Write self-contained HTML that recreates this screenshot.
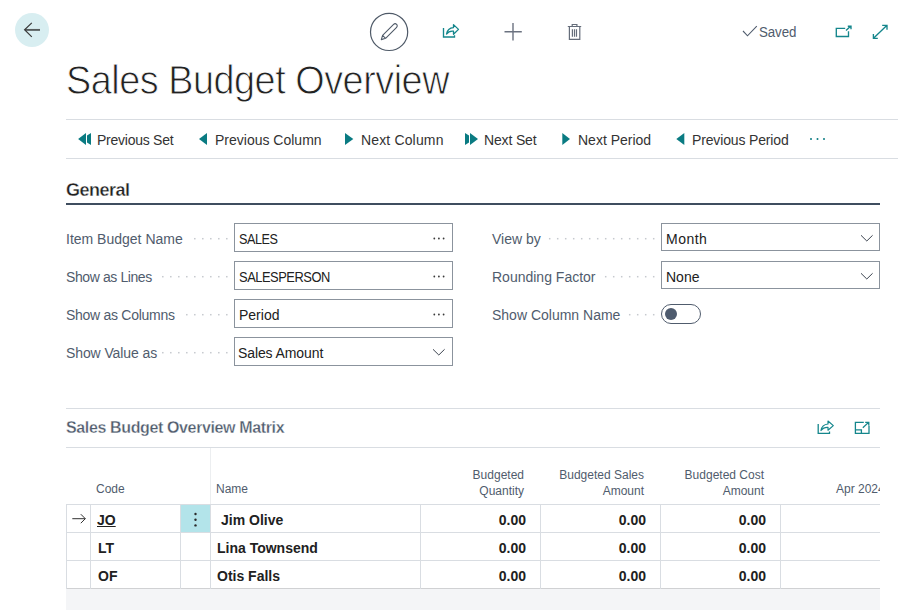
<!DOCTYPE html>
<html><head><meta charset="utf-8">
<style>
html,body{margin:0;padding:0;background:#fff;width:909px;height:610px;overflow:hidden;position:relative}
*{box-sizing:border-box}
body{font-family:"Liberation Sans",sans-serif;color:#212121}
.a{position:absolute}
.t{position:absolute;white-space:nowrap;line-height:1}
.hl{position:absolute;height:1px;background:#d9dde2}
.vl{position:absolute;width:1px;background:#d9dde2}
.lbl{position:absolute;white-space:nowrap;line-height:1;font-size:14px;color:#505c6d}
.dots{position:absolute;height:2px;background-image:radial-gradient(circle,#c4c8cd 0.8px,transparent 1px);background-size:8px 2px;background-repeat:repeat-x}
.box{position:absolute;border:1px solid #8b939d;background:#fff;width:219px;height:29px}
.val{position:absolute;white-space:nowrap;line-height:1;font-size:14px;color:#212121}
.act{position:absolute;white-space:nowrap;line-height:1;font-size:14px;color:#333}
.hdr{position:absolute;white-space:nowrap;line-height:1;font-size:12px;color:#505c6d;text-align:right}
.num{position:absolute;white-space:nowrap;line-height:1;font-size:14px;font-weight:bold;color:#212121;text-align:right}
.bold{position:absolute;white-space:nowrap;line-height:1;font-size:14px;font-weight:bold;color:#212121}
</style></head><body>

<!-- back button -->
<div class="a" style="left:15px;top:13px;width:34px;height:34px;border-radius:50%;background:#d8eef1"></div>
<svg class="a" style="left:0;top:0" width="909" height="60" viewBox="0 0 909 60">
  <path d="M25 29.9 H40" fill="none" stroke="#565c5d" stroke-width="1.9"/><path d="M31.8 22.9 L24.6 29.8 L31.8 36.9" fill="none" stroke="#3a3a3a" stroke-width="1.2"/>
  <circle cx="389.1" cy="31.9" r="18.6" fill="none" stroke="#4f5a68" stroke-width="1.2"/>
  <path d="M381.3 39.6 L382.6 35.3 L393.6 24.3 A2.12 2.12 0 0 1 396.6 27.3 L385.6 38.3 Z M382.6 35.3 L385.6 38.3" fill="none" stroke="#4f5a68" stroke-width="1.1" stroke-linejoin="round"/>
  <path d="M443.5 28 V37 H454.5 V35.3" fill="none" stroke="#14868c" stroke-width="1.35"/>
  <path d="M446.5 34 Q447.5 28 453.5 27.6 V24.6 L458.5 29.4 L453.5 34.2 V31.2 Q449 30.6 446.5 34 Z" fill="none" stroke="#14868c" stroke-width="1.3" stroke-linejoin="round"/>
  <path d="M513 23 V40.5 M504.5 31.8 H521.8" fill="none" stroke="#6b7280" stroke-width="1.4"/>
  <path d="M567.8 26.5 H581.2 M572.2 26.5 V24.5 H576.9 V26.5 M569.4 26.5 V39.4 H579.8 V26.5 M572.4 29.3 V36.8 M574.5 29.3 V36.8 M576.5 29.3 V36.8" fill="none" stroke="#656d7a" stroke-width="1.2"/>
  <path d="M743 31 L747.5 35.8 L756.8 26.2" fill="none" stroke="#505c6d" stroke-width="1.1"/>
  <path d="M845.2 28.4 H836.3 V36.5 H848.5 V31.3 M846 30.6 L850.5 26.3 M847.8 26.2 H851 V29.2" fill="none" stroke="#14868c" stroke-width="1.35"/>
  <path d="M873.5 38.3 L887 25.3 M882.2 25.3 H887 V29.8 M873.4 34 V38.3 H877.8" fill="none" stroke="#14868c" stroke-width="1.35"/>
</svg>
<div class="t" style="left:759px;top:25px;font-size:14px;color:#505c6d;letter-spacing:-0.1px;transform:scaleX(0.95);transform-origin:0 0">Saved</div>

<!-- title -->
<div class="t" style="left:65.5px;top:58.5px;font-size:41.5px;color:#222;letter-spacing:-0.5px;-webkit-text-stroke:0.9px #fff;transform:scaleX(0.91);transform-origin:0 0">Sales Budget Overview</div>

<!-- action bar -->
<div class="hl" style="left:66px;top:119px;width:832px"></div>
<div class="hl" style="left:66px;top:158px;width:832px"></div>
<svg class="a" style="left:0;top:120px" width="909" height="38" viewBox="0 120 909 38">
  <g fill="#0a7b82">
    <path d="M78.1 139 L86 133 V145 Z M91 133 L87 135.6 V142.4 L91 145 Z"/>
    <path d="M199 139 L207 133 V145 Z"/>
    <path d="M345 133 L353.3 139 L345 145 Z"/>
    <path d="M465 133 L469 135.6 V142.4 L465 145 Z M470 133 L478 139 L470 145 Z"/>
    <path d="M562.3 133 L570 139 L562.3 145 Z"/>
    <path d="M684.3 133 L676.3 139 L684.3 145 Z"/>
    <circle cx="811" cy="139" r="1"/><circle cx="817.5" cy="139" r="1"/><circle cx="824" cy="139" r="1"/>
  </g>
</svg>
<div class="act" style="left:97px;top:133px;letter-spacing:-0.25px">Previous Set</div>
<div class="act" style="left:215px;top:133px">Previous Column</div>
<div class="act" style="left:361px;top:133px;letter-spacing:0.15px">Next Column</div>
<div class="act" style="left:484px;top:133px;letter-spacing:-0.15px">Next Set</div>
<div class="act" style="left:578px;top:133px">Next Period</div>
<div class="act" style="left:692px;top:133px;letter-spacing:-0.15px">Previous Period</div>

<!-- General -->
<div class="t" style="left:66px;top:181px;font-size:18px;font-weight:bold;color:#212121;letter-spacing:-0.5px;-webkit-text-stroke:0.35px #fff">General</div>
<div class="a" style="left:66px;top:203px;width:814px;height:2px;background:#3f4d5f"></div>

<!-- fields left -->
<svg class="a" style="left:0;top:0" width="909" height="400" viewBox="0 0 909 400"><g fill="#c6c9ce"><rect x="226.05" y="237.95" width="1.5" height="1.5"/><rect x="218.05" y="237.95" width="1.5" height="1.5"/><rect x="210.05" y="237.95" width="1.5" height="1.5"/><rect x="202.05" y="237.95" width="1.5" height="1.5"/><rect x="194.05" y="237.95" width="1.5" height="1.5"/><rect x="226.05" y="275.95" width="1.5" height="1.5"/><rect x="218.05" y="275.95" width="1.5" height="1.5"/><rect x="210.05" y="275.95" width="1.5" height="1.5"/><rect x="202.05" y="275.95" width="1.5" height="1.5"/><rect x="194.05" y="275.95" width="1.5" height="1.5"/><rect x="186.05" y="275.95" width="1.5" height="1.5"/><rect x="178.05" y="275.95" width="1.5" height="1.5"/><rect x="170.05" y="275.95" width="1.5" height="1.5"/><rect x="162.05" y="275.95" width="1.5" height="1.5"/><rect x="226.05" y="313.95" width="1.5" height="1.5"/><rect x="218.05" y="313.95" width="1.5" height="1.5"/><rect x="210.05" y="313.95" width="1.5" height="1.5"/><rect x="202.05" y="313.95" width="1.5" height="1.5"/><rect x="194.05" y="313.95" width="1.5" height="1.5"/><rect x="186.05" y="313.95" width="1.5" height="1.5"/><rect x="226.05" y="351.95" width="1.5" height="1.5"/><rect x="218.05" y="351.95" width="1.5" height="1.5"/><rect x="210.05" y="351.95" width="1.5" height="1.5"/><rect x="202.05" y="351.95" width="1.5" height="1.5"/><rect x="194.05" y="351.95" width="1.5" height="1.5"/><rect x="186.05" y="351.95" width="1.5" height="1.5"/><rect x="178.05" y="351.95" width="1.5" height="1.5"/><rect x="170.05" y="351.95" width="1.5" height="1.5"/><rect x="162.05" y="351.95" width="1.5" height="1.5"/><rect x="652.95" y="237.95" width="1.5" height="1.5"/><rect x="644.95" y="237.95" width="1.5" height="1.5"/><rect x="636.95" y="237.95" width="1.5" height="1.5"/><rect x="628.95" y="237.95" width="1.5" height="1.5"/><rect x="620.95" y="237.95" width="1.5" height="1.5"/><rect x="612.95" y="237.95" width="1.5" height="1.5"/><rect x="604.95" y="237.95" width="1.5" height="1.5"/><rect x="596.95" y="237.95" width="1.5" height="1.5"/><rect x="588.95" y="237.95" width="1.5" height="1.5"/><rect x="580.95" y="237.95" width="1.5" height="1.5"/><rect x="572.95" y="237.95" width="1.5" height="1.5"/><rect x="564.95" y="237.95" width="1.5" height="1.5"/><rect x="556.95" y="237.95" width="1.5" height="1.5"/><rect x="548.95" y="237.95" width="1.5" height="1.5"/><rect x="652.95" y="275.95" width="1.5" height="1.5"/><rect x="644.95" y="275.95" width="1.5" height="1.5"/><rect x="636.95" y="275.95" width="1.5" height="1.5"/><rect x="628.95" y="275.95" width="1.5" height="1.5"/><rect x="620.95" y="275.95" width="1.5" height="1.5"/><rect x="612.95" y="275.95" width="1.5" height="1.5"/><rect x="604.95" y="275.95" width="1.5" height="1.5"/><rect x="652.95" y="313.95" width="1.5" height="1.5"/><rect x="644.95" y="313.95" width="1.5" height="1.5"/><rect x="636.95" y="313.95" width="1.5" height="1.5"/><rect x="628.95" y="313.95" width="1.5" height="1.5"/></g></svg>
<div class="lbl" style="left:66px;top:232px">Item Budget Name</div>
<div class="box" style="left:234px;top:223px"></div>
<div class="val" style="left:239px;top:232px;letter-spacing:-0.5px;transform:scaleX(0.9);transform-origin:0 0">SALES</div>
<svg class="a" style="left:430px;top:236px" width="20" height="6"><g fill="#3a3a3a"><circle cx="4.3" cy="2.5" r="0.9"/><circle cx="8.9" cy="2.5" r="0.9"/><circle cx="13.6" cy="2.5" r="0.9"/></g></svg>

<div class="lbl" style="left:66px;top:270px;letter-spacing:-0.4px">Show as Lines</div>
<div class="box" style="left:234px;top:261px"></div>
<div class="val" style="left:239px;top:270px;letter-spacing:-0.5px;transform:scaleX(0.92);transform-origin:0 0">SALESPERSON</div>
<svg class="a" style="left:430px;top:274px" width="20" height="6"><g fill="#3a3a3a"><circle cx="4.3" cy="2.5" r="0.9"/><circle cx="8.9" cy="2.5" r="0.9"/><circle cx="13.6" cy="2.5" r="0.9"/></g></svg>

<div class="lbl" style="left:66px;top:308px;letter-spacing:-0.28px">Show as Columns</div>
<div class="box" style="left:234px;top:299px"></div>
<div class="val" style="left:239px;top:308px">Period</div>
<svg class="a" style="left:430px;top:312px" width="20" height="6"><g fill="#3a3a3a"><circle cx="4.3" cy="2.5" r="0.9"/><circle cx="8.9" cy="2.5" r="0.9"/><circle cx="13.6" cy="2.5" r="0.9"/></g></svg>

<div class="lbl" style="left:66px;top:346px;letter-spacing:-0.1px">Show Value as</div>
<div class="box" style="left:234px;top:337px"></div>
<div class="val" style="left:238px;top:346px;letter-spacing:-0.1px">Sales Amount</div>
<svg class="a" style="left:431px;top:347px" width="16" height="10"><path d="M2 2.3 L7.8 8 L13.6 2.3" fill="none" stroke="#3c4450" stroke-width="1"/></svg>

<!-- fields right -->
<div class="lbl" style="left:492px;top:232px">View by</div>
<div class="box" style="left:661px;top:223px;height:28px"></div>
<div class="val" style="left:666px;top:232px;letter-spacing:0.5px">Month</div>
<svg class="a" style="left:858.5px;top:233.3px" width="16" height="10"><path d="M2 2.3 L7.8 8 L13.6 2.3" fill="none" stroke="#3c4450" stroke-width="1"/></svg>

<div class="lbl" style="left:492px;top:270px">Rounding Factor</div>
<div class="box" style="left:661px;top:261px;height:28px"></div>
<div class="val" style="left:666px;top:270px">None</div>
<svg class="a" style="left:858.5px;top:271.3px" width="16" height="10"><path d="M2 2.3 L7.8 8 L13.6 2.3" fill="none" stroke="#3c4450" stroke-width="1"/></svg>

<div class="lbl" style="left:492px;top:308px">Show Column Name</div>
<div class="a" style="left:661px;top:304px;width:40px;height:20px;border:1.3px solid #505c6d;border-radius:10px"></div>
<div class="a" style="left:665px;top:308px;width:12px;height:12px;border-radius:50%;background:#4e5b6e"></div>

<!-- matrix -->
<div class="hl" style="left:66px;top:408px;width:814px"></div>
<div class="t" style="left:66px;top:420px;font-size:16px;font-weight:bold;color:#505c6d;letter-spacing:-0.37px;-webkit-text-stroke:0.3px #fff">Sales Budget Overview Matrix</div>
<svg class="a" style="left:810px;top:412px" width="70" height="30" viewBox="810 412 70 30">
  <path d="M818.2 424 V433.4 H829.5 V431.5" fill="none" stroke="#14868c" stroke-width="1.3"/>
  <path d="M821 430.5 Q822 424.5 828 424 V421 L833.3 425.6 L828 430.2 V427.3 Q823.5 427 821 430.5 Z" fill="none" stroke="#14868c" stroke-width="1.2" stroke-linejoin="round"/>
  <path d="M863.8 422.3 H855.4 V433.4 H869 V425.8 M855.4 429.8 H861.4 V433.4 M862.8 427.8 L868.3 422.6 M865.2 422.3 H868.8 V425.5" fill="none" stroke="#14868c" stroke-width="1.3"/>
</svg>
<div class="hl" style="left:66px;top:447px;width:814px"></div>

<div class="vl" style="left:210px;top:448px;height:56px;background:#eceef0"></div>
<div class="t" style="left:96px;top:483px;font-size:12px;color:#505c6d">Code</div>
<div class="t" style="left:216px;top:483px;font-size:12px;color:#505c6d">Name</div>
<div class="hdr" style="left:404px;top:469px;width:120px">Budgeted</div>
<div class="hdr" style="left:404px;top:485px;width:120px">Quantity</div>
<div class="hdr" style="left:524px;top:469px;width:120px">Budgeted Sales</div>
<div class="hdr" style="left:524px;top:485px;width:120px">Amount</div>
<div class="hdr" style="left:644px;top:469px;width:120px">Budgeted Cost</div>
<div class="hdr" style="left:644px;top:485px;width:120px">Amount</div>
<div class="a" style="left:780px;top:448px;width:100px;height:56px;overflow:hidden"><div class="t" style="left:56px;top:35px;font-size:12px;color:#505c6d">Apr 2024</div></div>

<!-- rows -->
<div class="a" style="left:181px;top:505px;width:29px;height:27px;background:#b3e4ea"></div>
<div class="hl" style="left:66px;top:504px;width:814px"></div>
<div class="hl" style="left:66px;top:532px;width:814px"></div>
<div class="hl" style="left:66px;top:560px;width:814px"></div>
<div class="hl" style="left:66px;top:588px;width:814px;background:#d0d1d3"></div>
<div class="vl" style="left:66px;top:504px;height:85px"></div>
<div class="vl" style="left:90px;top:504px;height:85px"></div>
<div class="vl" style="left:180px;top:504px;height:85px"></div>
<div class="vl" style="left:210px;top:504px;height:85px"></div>
<div class="vl" style="left:420px;top:504px;height:85px"></div>
<div class="vl" style="left:540px;top:504px;height:85px"></div>
<div class="vl" style="left:660px;top:504px;height:85px"></div>
<div class="vl" style="left:780px;top:504px;height:85px"></div>
<div class="a" style="left:66px;top:589px;width:814px;height:21px;background:#f4f5f7"></div>

<svg class="a" style="left:66px;top:504px" width="150" height="30" viewBox="66 504 150 30">
  <path d="M72.3 518.7 H85.3 M80.8 514.2 L85.3 518.7 L80.8 523.2" fill="none" stroke="#333" stroke-width="1"/>
  <g fill="#2a2a2a"><circle cx="195.5" cy="514" r="1.2"/><circle cx="195.5" cy="519.7" r="1.2"/><circle cx="195.5" cy="525.4" r="1.2"/></g>
</svg>
<div class="bold" style="left:97px;top:513px;text-decoration:underline">JO</div>
<div class="bold" style="left:221px;top:513px">Jim Olive</div>
<div class="num" style="left:406px;top:513px;width:120px">0.00</div>
<div class="num" style="left:526px;top:513px;width:120px">0.00</div>
<div class="num" style="left:646px;top:513px;width:120px">0.00</div>

<div class="bold" style="left:98px;top:541px">LT</div>
<div class="bold" style="left:217px;top:541px">Lina Townsend</div>
<div class="num" style="left:406px;top:541px;width:120px">0.00</div>
<div class="num" style="left:526px;top:541px;width:120px">0.00</div>
<div class="num" style="left:646px;top:541px;width:120px">0.00</div>

<div class="bold" style="left:98px;top:569px">OF</div>
<div class="bold" style="left:217px;top:569px">Otis Falls</div>
<div class="num" style="left:406px;top:569px;width:120px">0.00</div>
<div class="num" style="left:526px;top:569px;width:120px">0.00</div>
<div class="num" style="left:646px;top:569px;width:120px">0.00</div>

</body></html>
